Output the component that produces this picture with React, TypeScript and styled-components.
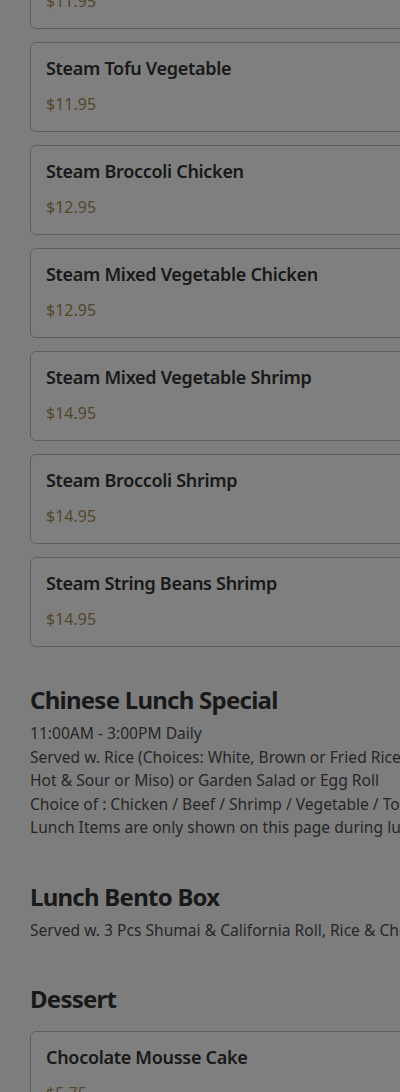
import React from "react";
import styled, { createGlobalStyle } from "styled-components";

const GlobalStyle = createGlobalStyle`
  html, body {
    margin: 0;
    padding: 0;
    background: #fbfbfb;
    overflow: hidden;
  }
  body {
    font-family: "Noto Sans", "Open Sans", sans-serif;
    color: #333;
  }
`;

const PageWrapper = styled.div`
  width: 560px;
  padding-left: 30px;
  margin-top: -61px;
`;

const Section = styled.section`
  padding-bottom: 37px;
`;

const SectionTitle = styled.h2`
  margin: 0;
  font-size: 24px;
  line-height: 32px;
  font-weight: 700;
  letter-spacing: -0.75px;
  color: #333;
`;

const SectionNote = styled.div`
  margin-top: 6px;
  margin-bottom: 4px;
  font-size: 15.6px;
  line-height: 23.5px;
  color: #4d4d4d;
  white-space: nowrap;
`;

const ItemList = styled.div<{ $first?: boolean }>`
  display: flex;
  flex-direction: column;
  gap: 13px;
  margin-top: ${({ $first }) => ($first ? "0" : "16px")};
`;

const ItemCard = styled.div`
  display: flex;
  flex-direction: column;
  gap: 10px;
  height: 90px;
  box-sizing: border-box;
  padding: 12px 15px 15px;
  background: #fff;
  border: 1px solid #bdbdbd;
  border-radius: 6px;
`;

const ItemName = styled.div`
  font-size: 18px;
  line-height: 27px;
  font-weight: 600;
  letter-spacing: -0.3px;
  color: #333;
`;

const ItemPrice = styled.div`
  font-size: 16px;
  line-height: 24px;
  color: #ab8c55;
`;

const Dimmer = styled.div`
  position: fixed;
  inset: 0;
  background: rgba(0, 0, 0, 0.5);
`;

type Item = { name: string; price: string };

const steamItems: Item[] = [
  { name: "Steam Mixed Vegetable", price: "$11.95" },
  { name: "Steam Tofu Vegetable", price: "$11.95" },
  { name: "Steam Broccoli Chicken", price: "$12.95" },
  { name: "Steam Mixed Vegetable Chicken", price: "$12.95" },
  { name: "Steam Mixed Vegetable Shrimp", price: "$14.95" },
  { name: "Steam Broccoli Shrimp", price: "$14.95" },
  { name: "Steam String Beans Shrimp", price: "$14.95" },
];

const dessertItems: Item[] = [
  { name: "Chocolate Mousse Cake", price: "$5.75" },
  { name: "Cheese Cake", price: "$5.75" },
];

const Items: React.FC<{ items: Item[]; first?: boolean }> = ({ items, first }) => (
  <ItemList $first={first}>
    {items.map((item) => (
      <ItemCard key={item.name}>
        <ItemName>{item.name}</ItemName>
        <ItemPrice>{item.price}</ItemPrice>
      </ItemCard>
    ))}
  </ItemList>
);

export default function App() {
  return (
    <>
      <GlobalStyle />
      <PageWrapper>
        <Section>
          <Items items={steamItems} first />
        </Section>

        <Section>
          <SectionTitle>Chinese Lunch Special</SectionTitle>
          <SectionNote>
            11:00AM - 3:00PM Daily
            <br />
            Served w. Rice (Choices: White, Brown or Fried Rice), Soup (Wonton,
            <br />
            Hot &amp; Sour or Miso) or Garden Salad or Egg Roll
            <br />
            Choice of : Chicken / Beef / Shrimp / Vegetable / Tofu
            <br />
            Lunch Items are only shown on this page during lunch hours.
          </SectionNote>
        </Section>

        <Section>
          <SectionTitle>Lunch Bento Box</SectionTitle>
          <SectionNote>Served w. 3 Pcs Shumai &amp; California Roll, Rice &amp; Chef Salad</SectionNote>
        </Section>

        <Section>
          <SectionTitle>Dessert</SectionTitle>
          <Items items={dessertItems} />
        </Section>
      </PageWrapper>
      <Dimmer />
    </>
  );
}
